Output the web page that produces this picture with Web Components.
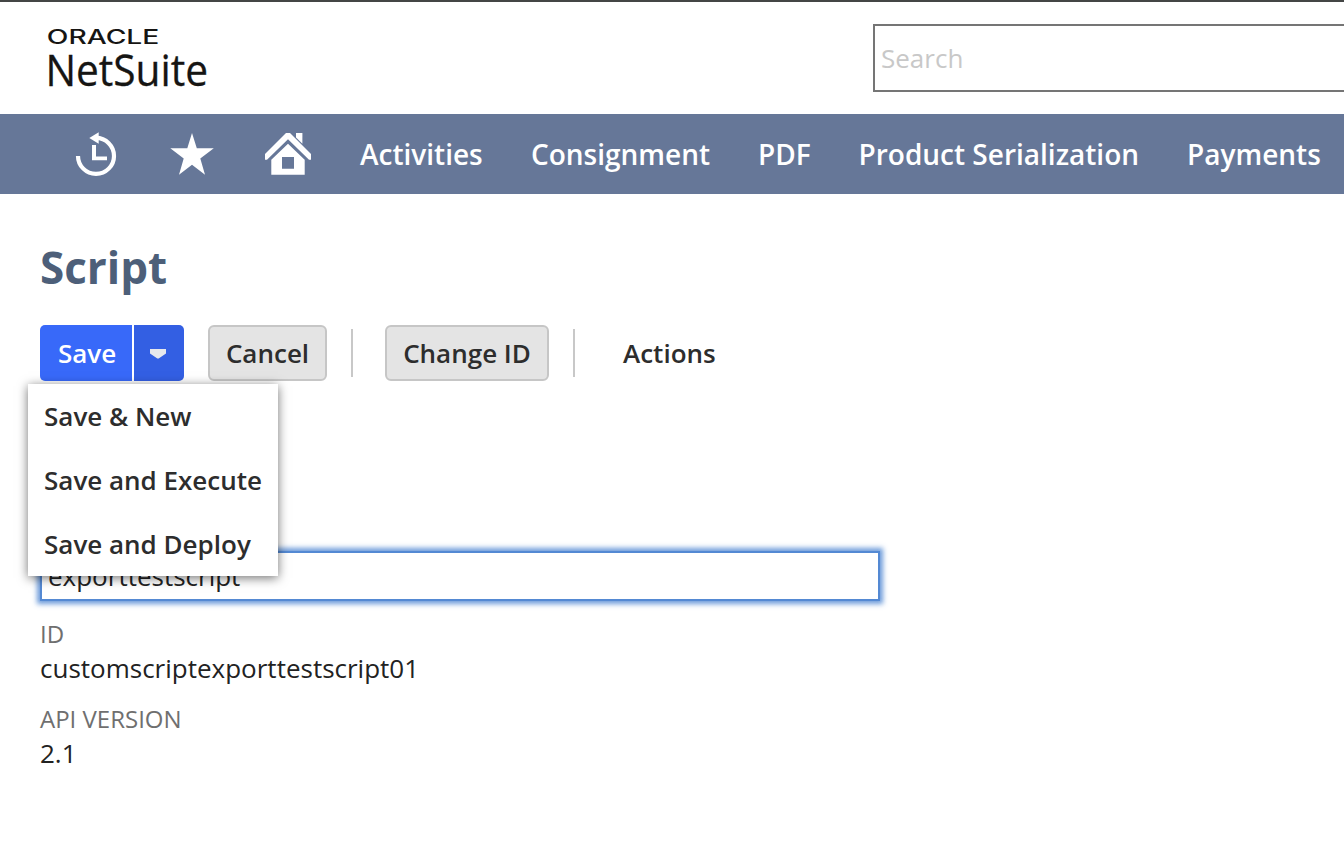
<!DOCTYPE html>
<html lang="en">
<head>
<meta charset="utf-8">
<title>Script - NetSuite</title>
<style>
    html, body { margin: 0; height: 100%; overflow: hidden; background: #fff; }
    body { font: 26px/36px "Open Sans", sans-serif; color: #222; }
</style>
</head>
<body>
<ns-app>
    <ns-header slot="header"></ns-header>
    <ns-nav slot="nav">
        <ns-icon name="recent"></ns-icon>
        <ns-icon name="star"></ns-icon>
        <ns-icon name="home"></ns-icon>
        <ns-nav-item style="width:123px">Activities</ns-nav-item>
        <ns-nav-item style="width:179px">Consignment</ns-nav-item>
        <ns-nav-item style="width:52.5px">PDF</ns-nav-item>
        <ns-nav-item style="width:280.5px">Product Serialization</ns-nav-item>
        <ns-nav-item style="width:134px">Payments</ns-nav-item>
    </ns-nav>
    <ns-page-title>Script</ns-page-title>
    <ns-toolbar>
        <ns-split-button label="Save">
            <ns-menu-item>Save &amp; New</ns-menu-item>
            <ns-menu-item>Save and Execute</ns-menu-item>
            <ns-menu-item>Save and Deploy</ns-menu-item>
        </ns-split-button>
        <ns-button style="width:119px">Cancel</ns-button>
        <ns-separator></ns-separator>
        <ns-button style="width:164px">Change ID</ns-button>
        <ns-separator></ns-separator>
        <ns-link>Actions</ns-link>
    </ns-toolbar>
    <ns-input>exporttestscript</ns-input>
    <ns-field label="ID">customscriptexporttestscript01</ns-field>
    <ns-field label="API VERSION">2.1</ns-field>
</ns-app>

<script>
/**
 * Base class, puts the static markup of the subclass in a shadow root.
 */
class NsElement extends HTMLElement {
    constructor() {
        super();
        this.attachShadow({ mode: 'open' });
    }

    connectedCallback() {
        this.shadowRoot.innerHTML = this.template();
    }
}

/**
 * Page frame: header, navigation and content.
 */
class NsApp extends NsElement {
    template() {
        return /*html*/`
            <style>
                :host { display: flex; flex-direction: column; height: 860px; box-sizing: border-box; border-top: 2px solid #444645; }
                main { display: flex; flex-direction: column; align-items: flex-start; padding: 42px 40px 0; }
            </style>
            <slot name="header"></slot>
            <slot name="nav"></slot>
            <main><slot></slot></main>
        `;
    }
}

/**
 * Logo and global search.
 */
class NsHeader extends NsElement {
    template() {
        return /*html*/`
            <style>
                :host { display: flex; justify-content: space-between; align-items: flex-start; height: 112px; padding-left: 40px; }
                svg { display: block; overflow: visible; }
                text { fill: #161513; }
                .oracle { font: 500 19.5px Inter, sans-serif; }
                .netsuite { font: 44.5px "Open Sans", sans-serif; stroke: #161513; stroke-width: .3px; }
                .search { box-sizing: border-box; width: 471px; height: 68px; margin-top: 22px; padding: 0 6px; border: 2px solid #757575; border-right: 0; color: #c8c8c8; line-height: 64px; }
            </style>
            <svg width="180" height="112" viewBox="40 2 180 112">
                <text class="oracle" x="46.8" y="44.4" textLength="112.5" lengthAdjust="spacingAndGlyphs">ORACLE</text>
                <text class="netsuite" x="45.4" y="85.5" textLength="162.6" lengthAdjust="spacingAndGlyphs">NetSuite</text>
            </svg>
            <div class="search">Search</div>
        `;
    }
}

/**
 * Navigation bar.
 */
class NsNav extends NsElement {
    template() {
        return /*html*/`
            <style>
                :host { display: flex; align-items: center; gap: 48px; height: 80px; padding-left: 72px; background: #667798; color: #fff; font-size: 28px; }
            </style>
            <slot></slot>
        `;
    }
}

class NsNavItem extends NsElement {
    template() {
        return /*html*/`
            <style>
                :host { display: block; flex: none; font-weight: 600; white-space: nowrap; }
            </style>
            <slot></slot>
        `;
    }
}

/**
 * White icon of the navigation bar.
 */
class NsIcon extends NsElement {
    static icons = {
        recent: `
            <path d="M6 23.9a18 18 0 1 0 18-18h-1" fill="none" stroke="#fff" stroke-width="4.2"/>
            <path d="M17.3 6l9.4-5.8v11.6z"/>
            <path d="M20 13h4v11.5h11v3.8H20z"/>`,
        star: `
            <path d="M24 1l4.8 15.3h17L32.3 26.4 37 42.7 24 32.8 11 42.7l4.7-16.3L2.3 16.3h17z"/>`,
        home: `
            <path d="M1 22L22 1h4l21 21v5.7h-2L24 7.2 3 27.7H1z"/>
            <path d="M32 1h6.4v10.7L32 5.4z"/>
            <path fill-rule="evenodd" d="M24 11.8l16.7 16v15H7.3v-15zM18 25.1v11.6h12V25.1z"/>`
    };

    template() {
        return /*html*/`
            <style>
                :host { display: block; flex: none; width: 48px; height: 44px; }
                svg { display: block; fill: #fff; }
            </style>
            <svg width="48" height="44" viewBox="0 0 48 44">${NsIcon.icons[this.getAttribute('name')]}</svg>
        `;
    }
}

class NsPageTitle extends NsElement {
    template() {
        return /*html*/`
            <style>
                :host { display: block; height: 62px; color: #4d5f79; font-size: 44px; font-weight: 700; line-height: 62px; }
            </style>
            <slot></slot>
        `;
    }
}

class NsToolbar extends NsElement {
    template() {
        return /*html*/`
            <style>
                :host { display: flex; align-items: center; gap: 24px; height: 56px; margin-top: 27px; color: #2d2d2d; font-weight: 600; }
            </style>
            <slot></slot>
        `;
    }
}

/**
 * Primary button with an open menu below it.
 */
class NsSplitButton extends NsElement {
    template() {
        return /*html*/`
            <style>
                :host { display: flex; position: relative; width: 144px; height: 56px; }
                .label, .arrow { display: flex; align-items: center; justify-content: center; box-sizing: border-box; }
                .label { width: 92px; padding: 0 0 1px 2px; border-radius: 5px 0 0 5px; background: #3869f9; color: #fff; }
                .arrow { width: 52px; padding-right: 2px; border-left: 2px solid #fff; border-radius: 0 5px 5px 0; background: #335fe3; background-clip: padding-box; }
                .menu { position: absolute; z-index: 1; left: -12px; top: 59px; width: 250px; background: #fff; box-shadow: 0 2px 10px rgba(0, 0, 0, .55); }
            </style>
            <div class="label">${this.getAttribute('label')}</div>
            <div class="arrow">
                <svg width="18" height="12" viewBox="0 0 18 12"><path d="M1 2h16v4.4l-6.6 4.7q-1.4 1-2.8 0L1 6.4z" fill="#e6e8ec"/></svg>
            </div>
            <div class="menu"><slot></slot></div>
        `;
    }
}

class NsMenuItem extends NsElement {
    template() {
        return /*html*/`
            <style>
                :host { display: block; height: 64px; padding-left: 16px; line-height: 64px; white-space: nowrap; }
            </style>
            <slot></slot>
        `;
    }
}

class NsButton extends NsElement {
    template() {
        return /*html*/`
            <style>
                :host { display: flex; align-items: center; justify-content: center; box-sizing: border-box; height: 56px; padding-bottom: 1px; border: 2px solid #c6c6c6; border-radius: 6px; background: #e4e4e4; white-space: nowrap; }
            </style>
            <slot></slot>
        `;
    }
}

class NsSeparator extends NsElement {
    template() {
        return /*html*/`
            <style>
                :host { display: block; width: 2px; height: 48px; margin-right: 8px; background: #c8c8c8; }
            </style>
        `;
    }
}

class NsLink extends NsElement {
    template() {
        return /*html*/`
            <style>
                :host { display: block; padding: 0 0 1px 16px; }
            </style>
            <slot></slot>
        `;
    }
}

/**
 * Focused text field.
 */
class NsInput extends NsElement {
    template() {
        return /*html*/`
            <style>
                :host { display: block; box-sizing: border-box; width: 840px; height: 50px; margin: 170px 0 14px; padding-left: 6px; border: 2px solid #5489d3; box-shadow: 0 0 5px 3px rgba(84, 137, 211, .85); line-height: 47px; }
            </style>
            <slot></slot>
        `;
    }
}

/**
 * Read only field with its label.
 */
class NsField extends NsElement {
    template() {
        return /*html*/`
            <style>
                :host { display: block; height: 85px; }
                .label { height: 36px; color: #6f6f6f; font-size: 24px; line-height: 37px; }
                .value { line-height: 35px; }
            </style>
            <div class="label">${this.getAttribute('label')}</div>
            <div class="value"><slot></slot></div>
        `;
    }
}

customElements.define('ns-app', NsApp);
customElements.define('ns-header', NsHeader);
customElements.define('ns-nav', NsNav);
customElements.define('ns-nav-item', NsNavItem);
customElements.define('ns-icon', NsIcon);
customElements.define('ns-page-title', NsPageTitle);
customElements.define('ns-toolbar', NsToolbar);
customElements.define('ns-split-button', NsSplitButton);
customElements.define('ns-menu-item', NsMenuItem);
customElements.define('ns-button', NsButton);
customElements.define('ns-separator', NsSeparator);
customElements.define('ns-link', NsLink);
customElements.define('ns-input', NsInput);
customElements.define('ns-field', NsField);
</script>
</body>
</html>
